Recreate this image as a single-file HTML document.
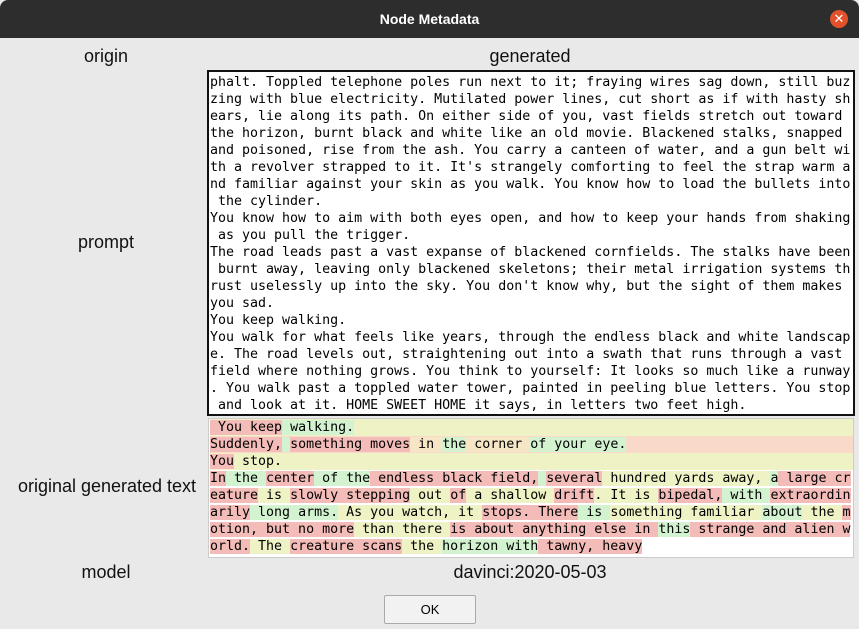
<!DOCTYPE html><html><head><style>
body{margin:0;width:859px;height:629px;background:#e9e9e9;font-family:"Liberation Sans",sans-serif;position:relative;overflow:hidden}
.tb{position:absolute;left:0;top:0;width:859px;height:38px;background:#2d2d2d;color:#fff;font-weight:bold;font-size:14px;text-align:center;line-height:38px;border-radius:8px 8px 0 0}
.x{position:absolute;left:830px;top:10px;width:18px;height:18px;border-radius:50%;background:#e2522a;color:#fff;font-size:13px;line-height:18px;text-align:center;font-weight:normal}
.l{position:absolute;font-size:18px;color:#111;text-align:center;white-space:nowrap}
.box{position:absolute;font-family:"DejaVu Sans Mono",monospace;font-size:13.3px;line-height:17px;white-space:pre;color:#000;overflow:hidden}
.r{background:#f4bcb8}.g{background:#d3f3d0}.y{background:#eff2c4}.p{background:#f9dac9}.o{background:#f7e6c6}
.ok{position:absolute;left:384px;top:595px;width:90px;height:27px;border:1px solid #aaa;background:#f2f2f2;font-size:13px;text-align:center;line-height:27px;border-radius:2px}
</style></head><body>
<div class="tb">Node Metadata<div class="x">✕</div></div>
<div class="l" style="left:40px;top:46px;width:132px">origin</div>
<div class="l" style="left:420px;top:46px;width:220px">generated</div>
<div class="l" style="left:40px;top:232px;width:132px">prompt</div>
<div class="l" style="left:0;top:476px;width:214px">original generated text</div>
<div class="l" style="left:40px;top:562px;width:132px">model</div>
<div class="l" style="left:420px;top:562px;width:220px">davinci:2020-05-03</div>
<div class="box" style="left:207px;top:70px;width:643px;height:340px;border:2px solid #111;background:#fff;padding-left:1px;padding-top:2px">phalt. Toppled telephone poles run next to it; fraying wires sag down, still buz
zing with blue electricity. Mutilated power lines, cut short as if with hasty sh
ears, lie along its path. On either side of you, vast fields stretch out toward
the horizon, burnt black and white like an old movie. Blackened stalks, snapped
and poisoned, rise from the ash. You carry a canteen of water, and a gun belt wi
th a revolver strapped to it. It's strangely comforting to feel the strap warm a
nd familiar against your skin as you walk. You know how to load the bullets into
 the cylinder.
You know how to aim with both eyes open, and how to keep your hands from shaking
 as you pull the trigger.
The road leads past a vast expanse of blackened cornfields. The stalks have been
 burnt away, leaving only blackened skeletons; their metal irrigation systems th
rust uselessly up into the sky. You don't know why, but the sight of them makes
you sad.
You keep walking.
You walk for what feels like years, through the endless black and white landscap
e. The road levels out, straightening out into a swath that runs through a vast
field where nothing grows. You think to yourself: It looks so much like a runway
. You walk past a toppled water tower, painted in peeling blue letters. You stop
 and look at it. HOME SWEET HOME it says, in letters two feet high.</div>
<div class="box" style="left:208px;top:418px;width:643px;height:138px;background:#fff;border:1px solid #ccc;padding-left:1px"><div class="y"><span class="r"> You keep</span><span class="g"> walking.</span>
</div><div class="p"><span class="r">Suddenly,</span><span class="g"> </span><span class="r">something moves</span><span class="o"> in </span><span class="g">the</span><span class="o"> corner </span><span class="g">of your eye.</span>
</div><div class="y"><span class="r">You</span> stop.
</div><span class="r">In</span><span class="g"> the </span><span class="r">center</span><span class="g"> of the</span><span class="r"> endless black field,</span><span class="g"> </span><span class="r">several</span><span class="y"> hundred yards away, </span><span class="g">a</span><span class="r"> large cr</span>
<span class="r">eature</span><span class="y"> is </span><span class="r">slowly stepping</span><span class="y"> out </span><span class="r">of</span><span class="y"> a shallow </span><span class="r">drift</span><span class="y">. It is </span><span class="r">bipedal,</span><span class="g"> with </span><span class="r">extraordin</span>
<span class="r">arily</span><span class="g"> long arms.</span><span class="y"> As you watch, it </span><span class="r">stops. There</span><span class="g"> is </span><span class="y">something familiar </span><span class="g">about</span><span class="y"> the </span><span class="r">m</span>
<span class="r">otion, but no more</span><span class="y"> than there </span><span class="r">is about anything else in </span><span class="g">this</span><span class="r"> strange and alien w</span>
<span class="r">orld.</span><span class="y"> The </span><span class="r">creature scans</span><span class="y"> the </span><span class="g">horizon with</span><span class="r"> tawny, heavy</span></div>
<div class="ok">OK</div>
</body></html>
